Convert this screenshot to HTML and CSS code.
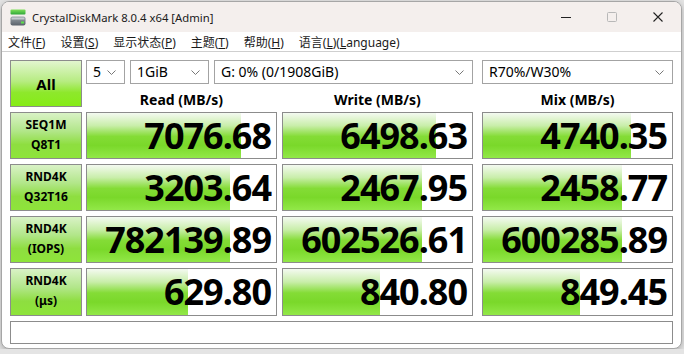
FILE: index.html
```html
<!DOCTYPE html>
<html lang="zh-CN">
<head>
    <meta charset="UTF-8">
    <title>CrystalDiskMark 8.0.4 x64 [Admin]</title>
    <link rel="stylesheet" href="styles.css">
</head>
<body>

<div class="window">
    <div class="titlebar">
        <svg class="app-icon" width="16" height="17" viewBox="0 0 16 17">
            <defs>
                <linearGradient id="gbar" x1="0" y1="0" x2="0" y2="1">
                    <stop offset="0" stop-color="#7fe05a"/>
                    <stop offset="1" stop-color="#2fa83a"/>
                </linearGradient>
                <linearGradient id="gdrive" x1="0" y1="0" x2="0" y2="1">
                    <stop offset="0" stop-color="#9aa2a8"/>
                    <stop offset="1" stop-color="#59616a"/>
                </linearGradient>
            </defs>
            <rect x="0.5" y="0.5" width="15" height="5" rx="1" fill="url(#gbar)"/>
            <rect x="0.5" y="7.5" width="15" height="9" rx="2" fill="url(#gdrive)"/>
            <rect x="1.5" y="8.5" width="13" height="2" fill="#c4cacf"/>
            <rect x="11" y="12.5" width="3" height="2" fill="#5ce04a"/>
        </svg>
        <span class="title">CrystalDiskMark 8.0.4 x64 [Admin]</span>
        <div class="win-controls">
            <span class="wbtn">
                <svg width="10" height="10" viewBox="0 0 10 10"><line x1="0" y1="5.5" x2="10" y2="5.5" stroke="#222" stroke-width="1"/></svg>
            </span>
            <span class="wbtn">
                <svg width="10" height="10" viewBox="0 0 10 10"><rect x="0.5" y="0.5" width="9" height="9" rx="1" fill="none" stroke="#b8b8b8" stroke-width="1"/></svg>
            </span>
            <span class="wbtn">
                <svg width="10" height="10" viewBox="0 0 10 10"><path d="M0.5 0.5 L9.5 9.5 M9.5 0.5 L0.5 9.5" stroke="#222" stroke-width="1.1"/></svg>
            </span>
        </div>
    </div>

    <div class="menubar">
        <span class="menu-item">文件(<u>F</u>)</span>
        <span class="menu-item">设置(<u>S</u>)</span>
        <span class="menu-item">显示状态(<u>P</u>)</span>
        <span class="menu-item">主题(<u>T</u>)</span>
        <span class="menu-item">帮助(<u>H</u>)</span>
        <span class="menu-item">语言(<u>L</u>)(<u>L</u>anguage)</span>
    </div>

    <div class="content">
        <div class="bench">
            <div class="all-btn">All</div>

            <div class="selects">
                <div class="select s-count">5 <svg class="chev" width="9" height="5" viewBox="0 0 9 5"><path d="M0.5 0.5 L4.5 4.5 L8.5 0.5" fill="none" stroke="#777"/></svg></div>
                <div class="select s-size">1GiB <svg class="chev" width="9" height="5" viewBox="0 0 9 5"><path d="M0.5 0.5 L4.5 4.5 L8.5 0.5" fill="none" stroke="#777"/></svg></div>
                <div class="select s-drive">G: 0% (0/1908GiB) <svg class="chev" width="9" height="5" viewBox="0 0 9 5"><path d="M0.5 0.5 L4.5 4.5 L8.5 0.5" fill="none" stroke="#777"/></svg></div>
                <div class="select s-mix">R70%/W30% <svg class="chev" width="9" height="5" viewBox="0 0 9 5"><path d="M0.5 0.5 L4.5 4.5 L8.5 0.5" fill="none" stroke="#777"/></svg></div>
            </div>

            <div class="col-head h-read">Read (MB/s)</div>
            <div class="col-head h-write">Write (MB/s)</div>
            <div class="col-head h-mix">Mix (MB/s)</div>

            <div class="test-btn">SEQ1M<br>Q8T1</div>
            <div class="cell"><div class="bar" style="width:81.5%"></div><span class="val">7076.68</span></div>
            <div class="cell"><div class="bar" style="width:81%"></div><span class="val">6498.63</span></div>
            <div class="cell"><div class="bar" style="width:78.3%"></div><span class="val">4740.35</span></div>

            <div class="test-btn">RND4K<br>Q32T16</div>
            <div class="cell"><div class="bar" style="width:75.7%"></div><span class="val">3203.64</span></div>
            <div class="cell"><div class="bar" style="width:73.5%"></div><span class="val">2467.95</span></div>
            <div class="cell"><div class="bar" style="width:73.5%"></div><span class="val">2458.77</span></div>

            <div class="test-btn">RND4K<br>(IOPS)</div>
            <div class="cell"><div class="bar" style="width:75.7%"></div><span class="val">782139.89</span></div>
            <div class="cell"><div class="bar" style="width:73.5%"></div><span class="val">602526.61</span></div>
            <div class="cell"><div class="bar" style="width:73.5%"></div><span class="val">600285.89</span></div>

            <div class="test-btn">RND4K<br>(μs)</div>
            <div class="cell"><div class="bar" style="width:53.4%"></div><span class="val">629.80</span></div>
            <div class="cell"><div class="bar" style="width:51.3%"></div><span class="val">840.80</span></div>
            <div class="cell"><div class="bar" style="width:51.3%"></div><span class="val">849.45</span></div>
        </div>

        <div class="comment"></div>
    </div>
</div>

</body>
</html>
```

FILE: styles.css
```css
body {
    margin: 0;
    padding: 0;
    background: #e4e4e4;
    font-family: 'Noto Sans', 'Noto Sans CJK SC', Arial, sans-serif;
    color: #000;
}

.window {
    width: 679px;
    height: 346px;
    margin: 1px 0 0 1px;
    border: 1px solid #a6a6a6;
    border-radius: 8px;
    overflow: hidden;
    background: #fff;
    box-shadow: 0 2px 6px rgba(0, 0, 0, 0.25);
}

.titlebar {
    height: 30px;
    background: #f4efed;
    display: flex;
    align-items: center;
    padding-left: 8px;
}

.app-icon {
    margin-top: 1px;
}

.title {
    margin-left: 6px;
    font-size: 11.3px;
    color: #1a1a1a;
}

.win-controls {
    margin-left: auto;
    display: flex;
    height: 30px;
}

.wbtn {
    width: 46px;
    display: flex;
    align-items: center;
    justify-content: center;
}

.menubar {
    height: 19px;
    display: flex;
    align-items: center;
    border-bottom: 1px solid #cfcfcf;
    font-size: 12px;
    color: #1a1a1a;
}

.menu-item {
    padding: 0 7.5px;
}

.menu-item:first-child {
    padding-left: 6px;
}

.menu-item u {
    text-underline-offset: 1px;
}

.content {
    padding: 8px 0 0 8px;
}

.bench {
    display: grid;
    grid-template-columns: 76px 196px 200px 191px;
    grid-template-rows: 24px 18px 47px 47px 47px 48px;
    row-gap: 5px;
}

.all-btn {
    grid-row: 1 / 3;
    width: 70px;
    border: 1px solid #8c8c8c;
    background: linear-gradient(to bottom, #e2f6cf 0%, #b7ec82 45%, #8ee82c 70%, #86ec16 100%);
    font-weight: bold;
    font-size: 15px;
    display: flex;
    align-items: center;
    justify-content: center;
}

.selects {
    grid-column: 2 / 5;
    display: flex;
}

.select {
    box-sizing: border-box;
    height: 24px;
    border: 1px solid #a3a3a3;
    background: #fff;
    font-size: 14px;
    line-height: 21px;
    padding-left: 6px;
    position: relative;
    margin-right: 5px;
}

.chev {
    position: absolute;
    right: 8px;
    top: 9px;
}

.s-count { width: 39px; }
.s-size { width: 79px; }
.s-drive { width: 259px; margin-right: 9px; }
.s-mix { width: 191px; margin-right: 0; }

.col-head {
    width: 191px;
    text-align: center;
    font-weight: bold;
    font-size: 14px;
    line-height: 18px;
    padding-top: 2px;
}

.test-btn {
    box-sizing: border-box;
    width: 72px;
    border: 1px solid #8c8c8c;
    background: linear-gradient(to bottom, #d9f2c6 0%, #b2e68a 40%, #8ede40 70%, #8ee43a 100%);
    font-weight: bold;
    font-size: 12px;
    line-height: 20px;
    text-align: center;
    padding-top: 2px;
}

.cell {
    box-sizing: border-box;
    width: 191px;
    border: 1px solid #8c8c8c;
    background: #fff;
    position: relative;
    display: flex;
    align-items: center;
    justify-content: flex-end;
}

.bar {
    position: absolute;
    left: 0;
    top: 0;
    bottom: 0;
    background: linear-gradient(to bottom, #f4faf1 0%, #c9eeaa 28%, #84dc36 52%, #7ad82a 72%, #92e848 100%);
}

.val {
    position: relative;
    font-size: 36px;
    font-weight: bold;
    letter-spacing: -1px;
    line-height: 40px;
    padding-right: 5px;
}

.comment {
    box-sizing: border-box;
    width: 663px;
    height: 23px;
    margin-top: 5px;
    border: 1px solid #8c8c8c;
}
```
